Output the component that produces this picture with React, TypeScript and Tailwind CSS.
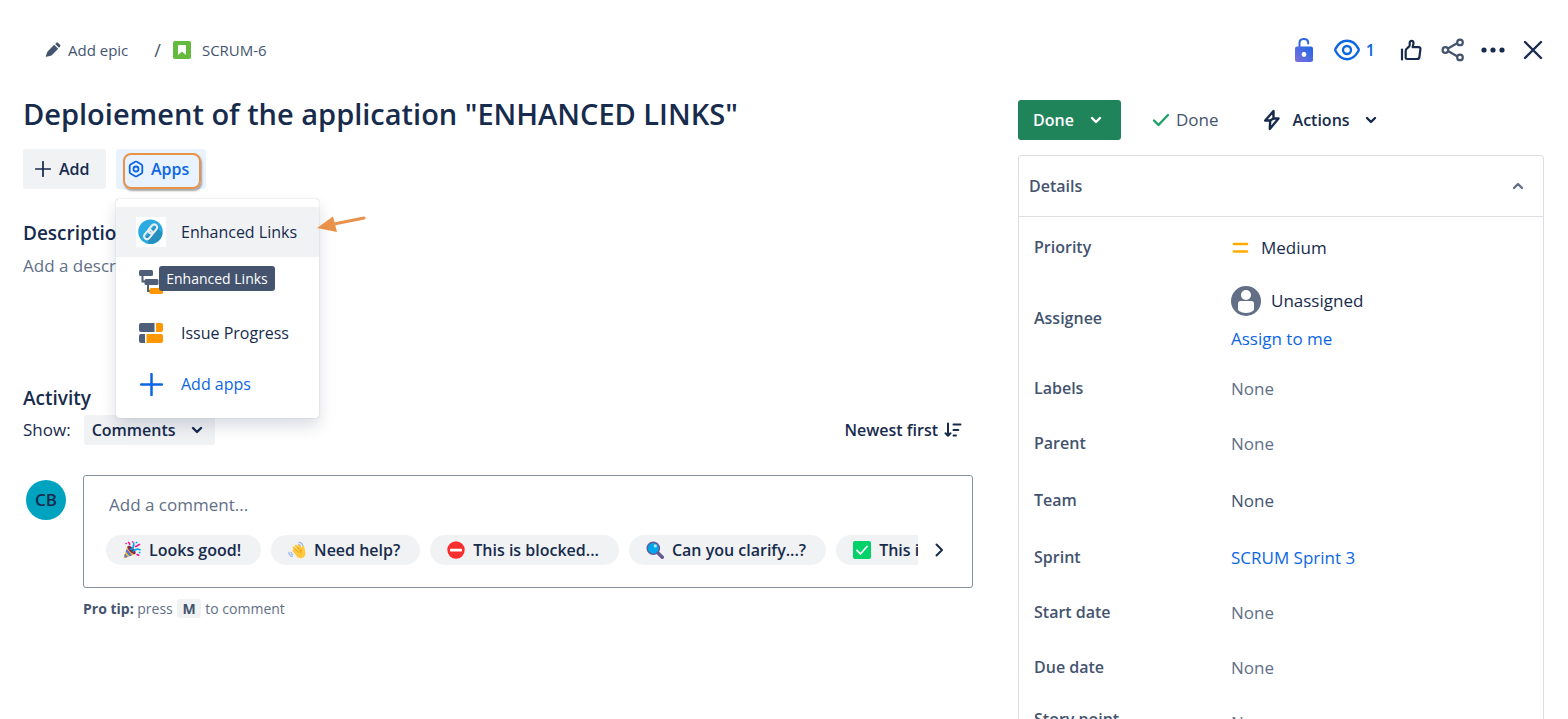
import { useState } from "react";
import type { ReactNode } from "react";

type IconProps = { className?: string };

const Chevron = ({ className = "" }: IconProps) => (
  <svg className={className} width="12" height="8" viewBox="0 0 12 8" fill="none" stroke="currentColor" strokeWidth="2.4" strokeLinecap="round" strokeLinejoin="round">
    <path d="M2 2l4 4 4-4" />
  </svg>
);

const ChevronNext = () => (
  <svg width="10" height="16" viewBox="0 0 10 16" fill="none" stroke="currentColor" strokeWidth="2" strokeLinecap="round" strokeLinejoin="round">
    <path d="M2.500 2.500 8 8l-5.500 5.500" />
  </svg>
);

const Pencil = () => (
  <svg width="16" height="16" viewBox="0 0 16 16" fill="currentColor">
    <path d="M2.800 9.200 9.200 2.800l4 4-6.400 6.400-1 .5L1.400 14.800c-.5.100-.7-.1-.6-.6l1.400-4zM10.200 2l1-1c.6-.6 1.400-.6 2 0l1.800 1.800c.6.600.6 1.400 0 2l-1 1z" />
  </svg>
);

const Story = () => (
  <svg width="18" height="18" viewBox="0 0 18 18">
    <rect width="18" height="18" rx="2" fill="#63ba3c" />
    <path d="M5 5a1 1 0 0 1 1-1h6a1 1 0 0 1 1 1v9l-4-3.6L5 14z" fill="#fff" />
  </svg>
);

const Lock = () => (
  <svg width="20" height="26" viewBox="0 0 20 26">
    <defs>
      <linearGradient id="lock" x1="0" y1="1" x2="1" y2="0">
        <stop offset="0" stopColor="#8270db" />
        <stop offset="1" stopColor="#1d66e5" />
      </linearGradient>
    </defs>
    <path d="M5.500 10V6c0-5 8-5.200 8.700-.6v1.200" fill="none" stroke="#2f66e0" strokeWidth="2" strokeLinecap="round" />
    <rect x="1" y="9.500" width="18" height="15.500" rx="2" fill="url(#lock)" />
    <circle cx="10" cy="17.500" r="2.400" fill="#fff" />
  </svg>
);

const Eye = () => (
  <svg width="26" height="22" viewBox="0 0 26 22" fill="none" stroke="currentColor" strokeWidth="2.4">
    <path d="M13 1.800C7.500 1.800 4 5.200 1.600 9.600a2.600 2.600 0 0 0 0 2.400C4 16.600 7.500 20.200 13 20.200s9-3.600 11.400-8.200a2.600 2.600 0 0 0 0-2.400C22 5.200 18.500 1.800 13 1.800z" />
    <circle cx="13" cy="11" r="4" />
  </svg>
);

const ThumbUp = () => (
  <svg width="22" height="22" viewBox="0 0 22 22" fill="none" stroke="currentColor" strokeWidth="2.2" strokeLinecap="round" strokeLinejoin="round">
    <path d="M2 10.500v10" />
    <path d="M5.700 19V12c0-1 .3-1.700 1-2.300L9 7.600c.5-.5.7-1 .7-1.700V3.500c0-2.200 3.600-2.300 3.800.5 0 1-.3 2.300-.9 4.200h6c1.300 0 2 .9 1.800 2.100l-1 7.700c-.2 1.400-1 2-2.200 2H7.200c-1 0-1.500-.4-1.500-1z" />
  </svg>
);

const Share = () => (
  <svg width="24" height="24" viewBox="0 0 24 24" fill="none" stroke="currentColor" strokeWidth="2.2">
    <path d="M7 10.500l9.500-5.500M7 13l9.500 5.500" />
    <circle cx="4.400" cy="12" r="2.800" />
    <circle cx="19" cy="4.400" r="2.800" />
    <circle cx="19" cy="19.400" r="2.800" />
  </svg>
);

const Dots = () => (
  <svg width="24" height="6" viewBox="0 0 24 6" fill="currentColor">
    <circle cx="3" cy="3" r="2.600" />
    <circle cx="12" cy="3" r="2.600" />
    <circle cx="21" cy="3" r="2.600" />
  </svg>
);

const Close = () => (
  <svg width="20" height="20" viewBox="0 0 20 20" stroke="currentColor" strokeWidth="2.4" strokeLinecap="round">
    <path d="M2 2l16 16M18 2L2 18" />
  </svg>
);

const Plus = ({ size }: { size: number }) => (
  <svg width={size} height={size} viewBox="0 0 22 22" stroke="currentColor" strokeWidth="2.4" strokeLinecap="round">
    <path d="M11 1v20M1 11h20" />
  </svg>
);

const AppsHex = () => (
  <svg width="16" height="18" viewBox="0 0 16 18" fill="none" stroke="currentColor" strokeWidth="1.8" strokeLinejoin="round">
    <path d="M7.200 1.800a1.600 1.600 0 0 1 1.600 0l4.700 2.700c.5.300.8.800.8 1.400v6.200c0 .6-.3 1.100-.8 1.400l-4.700 2.700a1.600 1.600 0 0 1-1.600 0l-4.700-2.700a1.600 1.600 0 0 1-.8-1.400V5.900c0-.6.3-1.100.8-1.400z" />
    <circle cx="8" cy="9" r="2.500" />
  </svg>
);

const Bolt = () => (
  <svg width="18" height="22" viewBox="0 0 18 22" fill="none" stroke="currentColor" strokeWidth="2.4" strokeLinejoin="round">
    <path d="M10.500 2 2.200 11.500h5L6.800 20l8.700-10.500h-5z" />
    <path d="M10.500 9.500 7.200 11.500" />
  </svg>
);

const SortDown = () => (
  <svg width="18" height="16" viewBox="0 0 18 16" fill="none" stroke="currentColor" strokeWidth="2" strokeLinecap="round" strokeLinejoin="round">
    <path d="M4 1.500v12M1.500 11.200 4 13.700l2.500-2.500M9.500 2.500h7M9.500 8h4.800M9.500 13.500h2.500" />
  </svg>
);

const LinksLogo = () => (
  <svg width="30" height="30" viewBox="0 0 30 30">
    <rect width="30" height="30" fill="#fff" />
    <circle cx="14.500" cy="14.800" r="12.300" fill="#29abe2" />
    <path d="M19.500 8.500l6.800 7.800a12.300 12.300 0 0 1-13 10.700l-4-6.500z" fill="#2590bf" />
    <g fill="none" stroke="#e8edf0" strokeWidth="2.1">
      <rect x="-5" y="-2.900" width="10" height="5.800" rx="2.900" transform="translate(16.800 12) rotate(-50)" />
      <rect x="-5" y="-2.900" width="10" height="5.800" rx="2.900" transform="translate(12.300 17.600) rotate(-50)" />
    </g>
  </svg>
);

const HierarchyLogo = () => (
  <svg width="24" height="25" viewBox="0 0 24 25">
    <path d="M3.500 4v7.500H8M9 13v8h4" fill="none" stroke="#505f79" strokeWidth="2" />
    <rect width="14" height="6" rx="1.500" fill="#505f79" />
    <rect x="5.500" y="9" width="14" height="6" rx="1.500" fill="#505f79" />
    <rect x="10.500" y="18" width="13.500" height="6" rx="1.500" fill="#ff9800" />
  </svg>
);

const ProgressLogo = () => (
  <svg width="24" height="20" viewBox="0 0 24 20">
    <path d="M2 0h13.500v9H2a2 2 0 0 1-2-2V2a2 2 0 0 1 2-2zM2 11h4v9H2a2 2 0 0 1-2-2v-5a2 2 0 0 1 2-2z" fill="#505f79" />
    <path d="M17 0h5a2 2 0 0 1 2 2v5a2 2 0 0 1-2 2h-5zM7.500 11H22a2 2 0 0 1 2 2v5a2 2 0 0 1-2 2H7.500z" fill="#ff9800" />
  </svg>
);

const Party = () => (
  <svg width="18" height="18" viewBox="0 0 18 18" fill="none" strokeLinecap="round">
    <path d="M4.600 5 .8 16.200c-.2.700.2 1.100.9.900L12.500 13z" fill="#ffb02e" />
    <path d="M3.600 8 9 14.300l-2.300.9-4-4.600zM2 12.700l2.700 3.300-2 .7-1.500-1.800z" fill="#4a78d8" />
    <ellipse cx="8.600" cy="8.900" rx="2.400" ry="5.400" transform="rotate(-44 8.600 8.900)" fill="#7d2f57" />
    <path d="M8 8.500c2.500-1.500 3-4 2.700-6.500M10.500 10c2-2 4-2.300 6.500-1.300" stroke="#00a6ed" strokeWidth="1.7" />
    <path d="M12.500 5.500c2-.2 2.500-1.800 4-2" stroke="#f70a8d" strokeWidth="1.6" />
    <path d="M5.500 1.500c1 .3 1.300 1 1.200 2M14 13.500l1.800.8" stroke="#f70a8d" strokeWidth="1.5" />
    <path d="M13.500 1.500h.2M16.500 11.500h.2" stroke="#00a6ed" strokeWidth="1.7" />
    <path d="M3 2.500h.2M9.500 1h.2" stroke="#f70a8d" strokeWidth="1.5" />
  </svg>
);

const Wave = () => (
  <svg width="18" height="18" viewBox="0 0 18 18" fill="none" strokeLinecap="round">
    <path d="M11 1.300c2 0 3.400 1 3.800 3M.8 11.500c.3 2.300 1.300 3.600 3.400 4.200M10.700 3.500c1 .2 1.600.7 1.900 1.600M3 11.500c.3 1.200.8 1.900 1.800 2.300" stroke="#9fb8ee" strokeWidth="1.3" />
    <path d="M5.600 9.500 10 15M5.800 6.500l5 6M8 4.700l5 6M10.800 4.800l4 6" stroke="#ffc83d" strokeWidth="2.3" />
    <path d="M7.500 9.500 13 7l1-.8c0-2 2-2.300 2.200-.5l1.200 6c.3 3-1.600 5.500-4.700 5.500-1.800 0-2.900-.9-3.900-2.200z" fill="#ffc83d" />
    <path d="M7.300 7.800l3 3.500M9.600 6.400l2.800 3.400M13.800 8.500c-1 .9-1.300 2-1 3.400" stroke="#d67d00" strokeWidth=".6" />
  </svg>
);

const NoEntry = () => (
  <svg width="18" height="18" viewBox="0 0 18 18">
    <circle cx="9" cy="9" r="8.700" fill="#f92f2f" />
    <rect x="3" y="7.700" width="12" height="2.700" rx=".6" fill="#fff" />
  </svg>
);

const Magnifier = () => (
  <svg width="18" height="18" viewBox="0 0 18 18" fill="none">
    <path d="M11 11l5.300 5.300" stroke="#635994" strokeWidth="3.4" strokeLinecap="round" />
    <circle cx="7.300" cy="7.300" r="6.100" fill="#00a6ed" stroke="#635994" strokeWidth="1.4" />
    <circle cx="9.300" cy="4.900" r="1.600" fill="#b5e6ff" />
  </svg>
);

const Tick = () => (
  <svg width="18" height="18" viewBox="0 0 18 18" fill="none">
    <rect width="18" height="18" rx="2" fill="#00d26a" />
    <path d="M4 9.300 7.400 13 14 5.500" stroke="#fff" strokeWidth="1.8" strokeLinecap="round" strokeLinejoin="round" />
  </svg>
);

const replies = [
  { icon: <Party />, text: "Looks good!" },
  { icon: <Wave />, text: "Need help?" },
  { icon: <NoEntry />, text: "This is blocked..." },
  { icon: <Magnifier />, text: "Can you clarify...?" },
  { icon: <Tick />, text: "This is on track" },
];

const Field = ({ label, height = "h-[55px]", children }: { label: string; height?: string; children: ReactNode }) => (
  <div className={`flex items-center ${height}`}>
    <dt className="w-[197px] shrink-0 pb-px text-base font-semibold text-[#44546f]">{label}</dt>
    <dd className="min-w-0 flex-1 text-[#626f86]">{children}</dd>
  </div>
);

const AppsMenu = () => (
  <div className="absolute top-[50px] left-0 z-10 w-[203px] rounded-[3px] bg-white pt-2 pb-[9px] text-base shadow-[0_8px_16px_rgba(9,30,66,0.15),0_0_1px_rgba(9,30,66,0.4)]">
    <button className="flex h-[50px] w-full items-center gap-[15px] bg-[#f1f2f4] pl-5">
      <LinksLogo />
      <span>Enhanced Links</span>
    </button>
    <button aria-label="Hierarchy" className="flex h-[50px] w-full items-center pl-[23px]">
      <HierarchyLogo />
    </button>
    <button className="flex h-[52px] w-full items-center gap-[18px] pl-[23px]">
      <ProgressLogo />
      <span>Issue Progress</span>
    </button>
    <button className="flex h-[50px] w-full items-center gap-[18px] pl-6 text-[#0c66e4]">
      <Plus size={23} />
      <span>Add apps</span>
    </button>
    <div role="tooltip" className="absolute top-[67px] left-[43px] h-[25px] w-[116px] rounded-[3px] bg-[#44546f] text-center text-sm leading-[26px] whitespace-nowrap text-white">
      Enhanced Links
    </div>
    <svg className="absolute top-[15px] left-[201px]" width="50" height="20" viewBox="0 0 50 20">
      <path d="M17 10 47 4" stroke="#e8914a" strokeWidth="3" strokeLinecap="round" />
      <path d="M0 14 16 2.500 20 18z" fill="#e8914a" />
    </svg>
  </div>
);

const App = () => {
  const [menuOpen, setMenuOpen] = useState(true);
  const [detailsOpen, setDetailsOpen] = useState(true);

  return (
    <div className="h-screen overflow-hidden bg-white font-['Open_Sans','Noto_Sans',sans-serif] text-[17px] leading-6 text-[#172b4d]">
      {/* Top bar */}
      <header className="flex items-center justify-between pt-[30px] pr-[15px] pl-[45px]">
        <nav className="flex items-center text-[15px] text-[#44546f]">
          <button className="flex items-center gap-[7px]">
            <Pencil />
            Add epic
          </button>
          <span className="ml-[26px] text-lg">/</span>
          <a href="#" className="ml-3 flex items-center gap-[11px]">
            <Story />
            SCRUM-6
          </a>
        </nav>
        <div className="flex h-10 items-center">
          <button aria-label="Restrict access" className="mr-5">
            <Lock />
          </button>
          <button aria-label="Watchers" className="mr-4 flex items-center gap-1.5 text-base font-semibold text-[#0c66e4]">
            <Eye />
            1
          </button>
          <button aria-label="Like" className="mr-0.5 flex size-10 items-center justify-center">
            <ThumbUp />
          </button>
          <button aria-label="Share" className="flex size-10 items-center justify-center text-[#44546f]">
            <Share />
          </button>
          <button aria-label="More" className="flex size-10 items-center justify-center">
            <Dots />
          </button>
          <button aria-label="Close" className="flex size-10 items-center justify-center">
            <Close />
          </button>
        </div>
      </header>

      <main className="grid grid-cols-[minmax(0,950fr)_minmax(0,526fr)] gap-[45px] pt-[30px] pr-6 pl-[23px]">
        {/* Issue content */}
        <section>
          <h1 className="text-[29px] leading-7 font-semibold">Deploiement of the application "ENHANCED LINKS"</h1>

          <div className="mt-[21px] flex gap-2.5">
            <button className="flex h-10 w-[83px] items-center gap-2 rounded-[3px] bg-[#f1f2f4] pl-3 text-base font-semibold">
              <Plus size={16} />
              Add
            </button>
            <div className="relative">
              <button
                className="flex h-10 w-[90px] items-center gap-[7px] rounded-[3px] bg-[#e9f2ff] pl-3 text-base font-semibold text-[#0c66e4]"
                onClick={() => setMenuOpen(!menuOpen)}
              >
                <AppsHex />
                Apps
              </button>
              <div className="pointer-events-none absolute top-1 left-[7px] h-9 w-[78px] rounded-lg border-2 border-[#e8914a] shadow-[1px_2px_2px_rgba(0,0,0,0.35)]" />
              {menuOpen && <AppsMenu />}
            </div>
          </div>

          <h2 className="mt-8 text-[19px] font-semibold">Description</h2>
          <p className="mt-[9px] text-[#626f86]">Add a description...</p>

          <h2 className="mt-[108px] text-[19px] font-semibold">Activity</h2>
          <div className="mt-[5px] flex items-center">
            <label htmlFor="activity">Show:</label>
            <div className="ml-[13px] grid w-[131px] items-center">
              <select id="activity" className="col-start-1 row-start-1 h-[30px] appearance-none rounded-[3px] bg-[#f1f2f4] pl-2 text-base font-semibold">
                <option>Comments</option>
                <option>History</option>
              </select>
              <Chevron className="pointer-events-none col-start-1 row-start-1 mr-3 justify-self-end" />
            </div>
            <button className="mr-[11px] ml-auto flex items-center gap-1.5 text-base font-semibold">
              Newest first
              <SortDown />
            </button>
          </div>

          {/* Comment box */}
          <div className="mt-[30px] flex">
            <div className="mt-[5px] ml-[3px] flex size-10 shrink-0 items-center justify-center rounded-full bg-[#00a3bf] font-semibold">
              CB
            </div>
            <div className="ml-[17px] min-w-0 flex-1">
              <div className="rounded-[3px] border border-[#8590a2] pt-[17px] pb-[22px] pl-[22px]">
                <input
                  aria-label="Add a comment"
                  placeholder="Add a comment..."
                  className="block h-6 w-full px-[3px] outline-none placeholder:text-[#626f86]"
                />
                <div className="mt-[18px] flex items-center">
                  <div className="flex min-w-0 flex-1 gap-2.5 overflow-hidden">
                    {replies.map((reply) => (
                      <button
                        key={reply.text}
                        className="flex h-[30px] shrink-0 items-center gap-2 rounded-full bg-[#f1f2f4] pr-5 pl-[17px] text-base font-semibold whitespace-nowrap"
                      >
                        {reply.icon}
                        {reply.text}
                      </button>
                    ))}
                  </div>
                  <button aria-label="Next" className="mr-3 flex h-[30px] w-[42px] items-center justify-center">
                    <ChevronNext />
                  </button>
                </div>
              </div>
              <p className="mt-[11px] text-sm leading-5 text-[#626f86]">
                <span className="font-bold text-[#44546f]">Pro tip:</span> press{" "}
                <kbd className="mx-px rounded-[3px] bg-[#f1f2f4] px-[5px] font-[inherit] font-bold text-[#44546f]">M</kbd> to comment
              </p>
            </div>
          </div>
        </section>

        {/* Side panel */}
        <aside>
          <div className="flex items-center">
            <div className="grid w-[103px] items-center text-white">
              <select aria-label="Status" className="col-start-1 row-start-1 h-10 appearance-none rounded-[3px] bg-[#1f845a] pl-[15px] text-base font-semibold">
                <option>Done</option>
                <option>To Do</option>
              </select>
              <Chevron className="pointer-events-none col-start-1 row-start-1 mr-[19px] justify-self-end" />
            </div>
            <span className="ml-[31px] flex items-center gap-1.5 text-[#44546f]">
              <svg width="18" height="14" viewBox="0 0 18 14" fill="none" stroke="#22a06b" strokeWidth="2.4" strokeLinecap="round" strokeLinejoin="round">
                <path d="M2 7.500 6.500 12 16 2" />
              </svg>
              Done
            </span>
            <button className="ml-11 flex items-center text-base font-semibold">
              <Bolt />
              <span className="mr-[15px] ml-3">Actions</span>
              <Chevron />
            </button>
          </div>

          <div className="mt-[15px] rounded-[3px] border border-[#dcdfe4]">
            <button
              className="flex h-[61px] w-full items-center justify-between border-b border-[#dcdfe4] pr-[19px] pl-2.5 text-base font-semibold text-[#44546f]"
              onClick={() => setDetailsOpen(!detailsOpen)}
            >
              Details
              <Chevron className="rotate-180 text-[#626f86]" />
            </button>
            {detailsOpen && (
              <dl className="pt-[3px] pl-[15px]">
                <Field label="Priority">
                  <span className="flex items-center gap-3 text-[#172b4d]">
                    <svg width="18" height="12" viewBox="0 0 18 12" stroke="#ffab00" strokeWidth="2.6" strokeLinecap="round">
                      <path d="M3 2h13M3 9.500h13" />
                    </svg>
                    Medium
                  </span>
                </Field>
                <Field label="Assignee" height="h-[86px]">
                  <span className="flex items-center gap-2.5 text-[#172b4d]">
                    <svg width="30" height="30" viewBox="0 0 30 30">
                      <circle cx="15" cy="15" r="15" fill="#626f86" />
                      <circle cx="15" cy="9" r="5" fill="#fff" />
                      <path d="M7 17.500a2.500 2.500 0 0 1 2.500-2.500h11a2.500 2.500 0 0 1 2.500 2.500V24c-3.500 4-12.500 4-16 0z" fill="#fff" />
                    </svg>
                    Unassigned
                  </span>
                  <a href="#" className="mt-[11px] block text-[#0c66e4]">Assign to me</a>
                </Field>
                <Field label="Labels">None</Field>
                <Field label="Parent">None</Field>
                <Field label="Team" height="h-[59px]">
                  <span className="text-[#44546f]">None</span>
                </Field>
                <Field label="Sprint">
                  <a href="#" className="text-[#0c66e4]">SCRUM Sprint 3</a>
                </Field>
                <Field label="Start date">None</Field>
                <Field label="Due date">None</Field>
                <div className="flex items-start pt-3">
                  <dt className="w-[197px] shrink-0 pr-24 text-base font-semibold text-[#44546f]">Story point estimate</dt>
                  <dd className="leading-8 text-[#626f86]">None</dd>
                </div>
              </dl>
            )}
          </div>
        </aside>
      </main>
    </div>
  );
};

export default App;
